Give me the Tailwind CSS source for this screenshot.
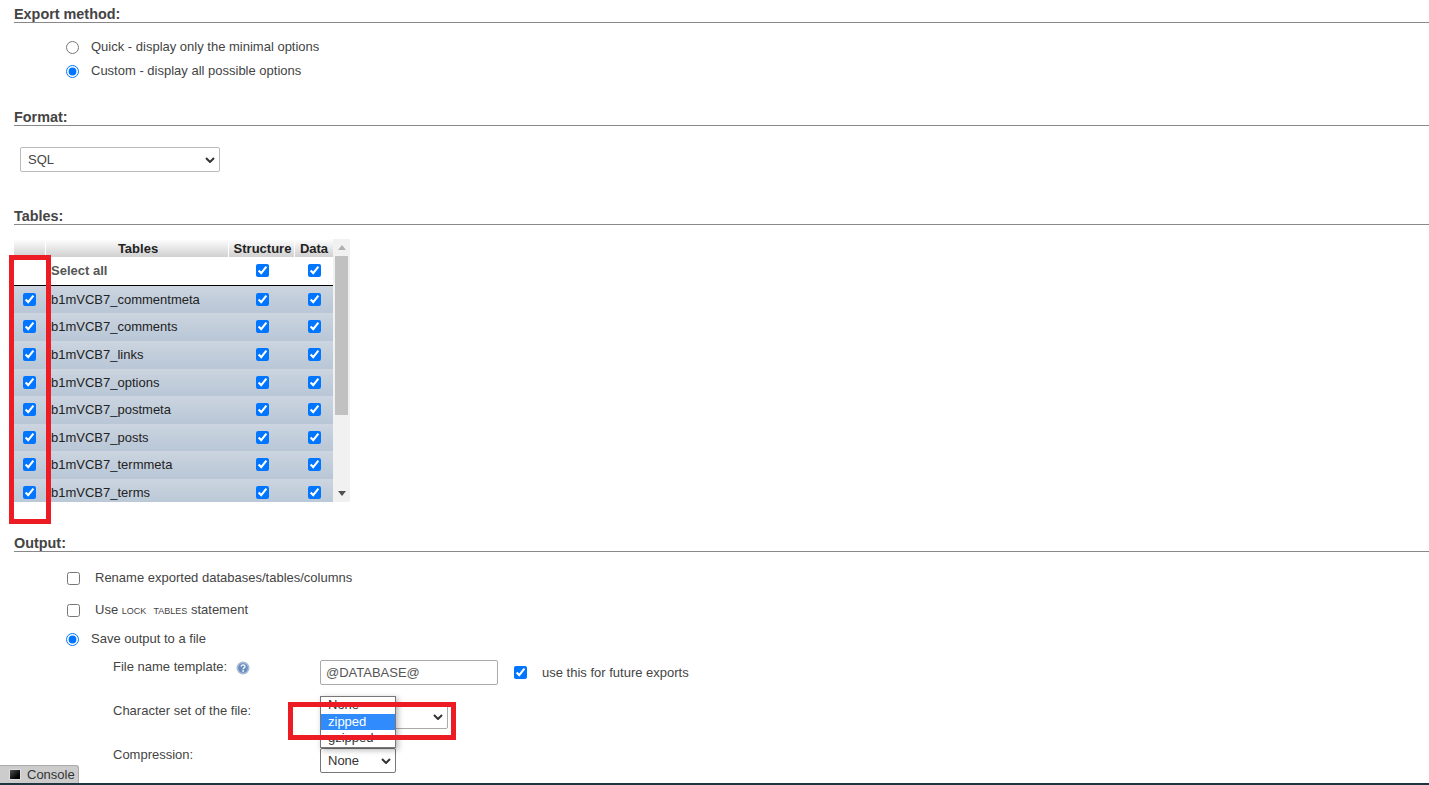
<!DOCTYPE html>
<html lang="en">
  <head>
    <meta charset="UTF-8" />
    <title>Export</title>
    <script src="https://cdn.jsdelivr.net/npm/@tailwindcss/browser@4"></script>
  </head>
  <body class="relative h-[785px] w-[1429px] overflow-hidden bg-white font-['Liberation_Sans',Arial,sans-serif] text-[13px] text-[#444]">
    <main class="pl-[14px]">
      <!-- export method -->
      <h3 class="mt-[7px] h-[16px] border-b border-[#888] text-[14.4px] leading-[15px] font-bold text-[#444]">Export method:</h3>
      <div class="mt-[16px] ml-[52px] flex h-[16px] items-center gap-[12px]">
        <input type="radio" name="method" class="m-0 h-[13px] w-[13px]" />
        <span>Quick - display only the minimal options</span>
      </div>
      <div class="mt-[8px] ml-[52px] flex h-[16px] items-center gap-[12px]">
        <input type="radio" name="method" checked class="m-0 h-[13px] w-[13px]" />
        <span>Custom - display all possible options</span>
      </div>

      <!-- format -->
      <h3 class="mt-[31px] h-[16px] border-b border-[#888] text-[14.4px] leading-[15px] font-bold">Format:</h3>
      <div class="relative mt-[21px] ml-[6px] flex h-[25px] w-[200px] items-center rounded-[2px] border border-[#bbb] pl-[7px]">
        SQL
        <svg class="absolute top-[9px] right-[4px] h-[6px] w-[10px]" viewBox="0 0 10 6"><path d="M1 1l4 4 4-4" fill="none" stroke="#333" stroke-width="2" /></svg>
      </div>

      <!-- tables -->
      <h3 class="mt-[37px] h-[16px] border-b border-[#888] text-[14.4px] leading-[15px] font-bold">Tables:</h3>
      <div class="mt-[14px] flex h-[263px] w-[336px] overflow-hidden">
        <div class="w-[319px] overflow-hidden">
          <div class="flex h-[18px] bg-gradient-to-b from-white to-[#d0d0d0] text-center leading-[20px] font-bold text-[#222]">
            <div class="w-[32px] border-r border-white"></div>
            <div class="w-[183px] border-r border-white pl-[2px]">Tables</div>
            <div class="w-[66px] border-r border-white pl-[2px]">Structure</div>
            <div class="w-[38px]">Data</div>
          </div>
          <div class="flex h-[29px] items-center border-b border-black bg-white pb-[1px]">
            <div class="w-[31px]"></div>
            <div class="w-[184px] pl-[6px] font-bold text-[#555]">Select all</div>
            <div class="flex w-[67px] justify-center"><input type="checkbox" checked class="m-0 h-[13px] w-[13px]" /></div>
            <div class="flex w-[37px] justify-center"><input type="checkbox" checked class="m-0 h-[13px] w-[13px]" /></div>
          </div>
          <div class="flex h-[27px] items-center bg-gradient-to-b from-[#ccd5e0] to-[#b8c6d6] text-[#222]">
            <div class="flex w-[31px] justify-center"><input type="checkbox" checked class="m-0 h-[13px] w-[13px]" /></div>
            <div class="w-[184px] pl-[6px]">b1mVCB7_commentmeta</div>
            <div class="flex w-[67px] justify-center"><input type="checkbox" checked class="m-0 h-[13px] w-[13px]" /></div>
            <div class="flex w-[37px] justify-center"><input type="checkbox" checked class="m-0 h-[13px] w-[13px]" /></div>
          </div>
          <div class="flex h-[27.5px] items-center bg-gradient-to-b from-[#ccd5e0] to-[#b8c6d6] text-[#222]">
            <div class="flex w-[31px] justify-center"><input type="checkbox" checked class="m-0 h-[13px] w-[13px]" /></div>
            <div class="w-[184px] pl-[6px]">b1mVCB7_comments</div>
            <div class="flex w-[67px] justify-center"><input type="checkbox" checked class="m-0 h-[13px] w-[13px]" /></div>
            <div class="flex w-[37px] justify-center"><input type="checkbox" checked class="m-0 h-[13px] w-[13px]" /></div>
          </div>
          <div class="flex h-[28px] items-center bg-gradient-to-b from-[#ccd5e0] to-[#b8c6d6] text-[#222]">
            <div class="flex w-[31px] justify-center"><input type="checkbox" checked class="m-0 h-[13px] w-[13px]" /></div>
            <div class="w-[184px] pl-[6px]">b1mVCB7_links</div>
            <div class="flex w-[67px] justify-center"><input type="checkbox" checked class="m-0 h-[13px] w-[13px]" /></div>
            <div class="flex w-[37px] justify-center"><input type="checkbox" checked class="m-0 h-[13px] w-[13px]" /></div>
          </div>
          <div class="flex h-[27.5px] items-center bg-gradient-to-b from-[#ccd5e0] to-[#b8c6d6] text-[#222]">
            <div class="flex w-[31px] justify-center"><input type="checkbox" checked class="m-0 h-[13px] w-[13px]" /></div>
            <div class="w-[184px] pl-[6px]">b1mVCB7_options</div>
            <div class="flex w-[67px] justify-center"><input type="checkbox" checked class="m-0 h-[13px] w-[13px]" /></div>
            <div class="flex w-[37px] justify-center"><input type="checkbox" checked class="m-0 h-[13px] w-[13px]" /></div>
          </div>
          <div class="flex h-[27.5px] items-center bg-gradient-to-b from-[#ccd5e0] to-[#b8c6d6] text-[#222]">
            <div class="flex w-[31px] justify-center"><input type="checkbox" checked class="m-0 h-[13px] w-[13px]" /></div>
            <div class="w-[184px] pl-[6px]">b1mVCB7_postmeta</div>
            <div class="flex w-[67px] justify-center"><input type="checkbox" checked class="m-0 h-[13px] w-[13px]" /></div>
            <div class="flex w-[37px] justify-center"><input type="checkbox" checked class="m-0 h-[13px] w-[13px]" /></div>
          </div>
          <div class="flex h-[27.5px] items-center bg-gradient-to-b from-[#ccd5e0] to-[#b8c6d6] text-[#222]">
            <div class="flex w-[31px] justify-center"><input type="checkbox" checked class="m-0 h-[13px] w-[13px]" /></div>
            <div class="w-[184px] pl-[6px]">b1mVCB7_posts</div>
            <div class="flex w-[67px] justify-center"><input type="checkbox" checked class="m-0 h-[13px] w-[13px]" /></div>
            <div class="flex w-[37px] justify-center"><input type="checkbox" checked class="m-0 h-[13px] w-[13px]" /></div>
          </div>
          <div class="flex h-[27.5px] items-center bg-gradient-to-b from-[#ccd5e0] to-[#b8c6d6] text-[#222]">
            <div class="flex w-[31px] justify-center"><input type="checkbox" checked class="m-0 h-[13px] w-[13px]" /></div>
            <div class="w-[184px] pl-[6px]">b1mVCB7_termmeta</div>
            <div class="flex w-[67px] justify-center"><input type="checkbox" checked class="m-0 h-[13px] w-[13px]" /></div>
            <div class="flex w-[37px] justify-center"><input type="checkbox" checked class="m-0 h-[13px] w-[13px]" /></div>
          </div>
          <div class="flex h-[27.5px] items-center bg-gradient-to-b from-[#ccd5e0] to-[#b8c6d6] text-[#222]">
            <div class="flex w-[31px] justify-center"><input type="checkbox" checked class="m-0 h-[13px] w-[13px]" /></div>
            <div class="w-[184px] pl-[6px]">b1mVCB7_terms</div>
            <div class="flex w-[67px] justify-center"><input type="checkbox" checked class="m-0 h-[13px] w-[13px]" /></div>
            <div class="flex w-[37px] justify-center"><input type="checkbox" checked class="m-0 h-[13px] w-[13px]" /></div>
          </div>
        </div>
        <!-- scrollbar -->
        <div class="flex w-[17px] flex-col items-center bg-[#f1f1f1]">
          <svg class="mt-[6px] h-[5px] w-[8px]" viewBox="0 0 8 5"><path d="M4 0l4 5H0z" fill="#b0b0b0" /></svg>
          <div class="mt-[6px] h-[159px] w-[13px] bg-[#c1c1c1]"></div>
          <svg class="mt-auto mb-[6px] h-[5px] w-[8px]" viewBox="0 0 8 5"><path d="M0 0h8L4 5z" fill="#505050" /></svg>
        </div>
      </div>

      <!-- output -->
      <h3 class="mt-[33px] h-[17px] border-b border-[#888] pt-[1px] text-[14.4px] leading-[15px] font-bold">Output:</h3>
      <div class="mt-[18px] ml-[53px] flex h-[16px] items-center gap-[15px]">
        <input type="checkbox" class="m-0 h-[13px] w-[13px]" />
        <span>Rename exported databases/tables/columns</span>
      </div>
      <div class="mt-[16px] ml-[53px] flex h-[16px] items-center gap-[15px]">
        <input type="checkbox" class="m-0 h-[13px] w-[13px]" />
        <span>Use <span class="[font-variant:small-caps]">lock&nbsp; tables</span> statement</span>
      </div>
      <div class="mt-[13px] ml-[52px] flex h-[16px] items-center gap-[12px]">
        <input type="radio" checked class="m-0 h-[13px] w-[13px]" />
        <span>Save output to a file</span>
      </div>
      <div class="mt-[13px] ml-[99px] flex h-[25px] items-start">
        <span class="w-[123px] leading-[13px]">File name template:</span>
        <svg class="mt-[1px] h-[14px] w-[14px]" viewBox="0 0 14 14">
          <circle cx="7" cy="7" r="6.5" fill="#a8bcd6" />
          <circle cx="7" cy="7" r="4.8" fill="#6a8dc0" />
          <path d="M5.2 5.6c0-2.2 3.8-2.2 3.8 0 0 1.3-1.9 1.3-1.9 2.6" fill="none" stroke="#fff" stroke-width="1.3" />
          <circle cx="7.1" cy="10" r=".9" fill="#fff" />
        </svg>
        <div class="ml-[70px] flex h-[25px] w-[178px] items-center rounded-[2px] border border-[#aaa] pl-[5px] text-[#555]">@DATABASE@</div>
        <input type="checkbox" checked class="mt-[6px] ml-[16px] h-[13px] w-[13px]" />
        <span class="ml-[15px] pt-[6px] leading-[13px]">use this for future exports</span>
      </div>
      <div class="mt-[19px] ml-[99px] flex h-[25px] items-start">
        <span class="w-[207px] leading-[13px]">Character set of the file:</span>
        <div class="relative h-[25px] w-[128px] rounded-[2px] border border-[#aaa]">
          <svg class="absolute top-[9px] right-[4px] h-[6px] w-[10px]" viewBox="0 0 10 6"><path d="M1 1l4 4 4-4" fill="none" stroke="#333" stroke-width="2" /></svg>
        </div>
      </div>
      <div class="mt-[19px] ml-[99px] flex h-[25px] items-start">
        <span class="w-[207px] leading-[13px]">Compression:</span>
        <div class="relative flex h-[25px] w-[76px] items-center rounded-[2px] border border-[#777] pl-[7px] text-[#333]">
          None
          <svg class="absolute top-[9px] right-[4px] h-[6px] w-[10px]" viewBox="0 0 10 6"><path d="M1 1l4 4 4-4" fill="none" stroke="#333" stroke-width="2" /></svg>
        </div>
      </div>
    </main>

    <!-- open select list -->
    <div class="absolute top-[696px] left-[320px] h-[52px] w-[76px] overflow-hidden border border-[#777] bg-white leading-[15px] text-[#333] shadow-[2px_2px_6px_rgba(0,0,0,0.3)]">
      <div class="h-[17px] pl-[7px]">None</div>
      <div class="h-[16px] bg-[#308cfc] pl-[7px] text-white">zipped</div>
      <div class="h-[16px] pl-[7px]">gzipped</div>
    </div>

    <!-- red annotations -->
    <div class="absolute top-[255px] left-[9px] h-[269px] w-[42px] border-[5px] border-[#ed1c24]"></div>
    <div class="absolute top-[702px] left-[288px] h-[38px] w-[168px] border-[5px] border-[#ed1c24]"></div>

    <!-- console -->
    <div class="absolute bottom-[2px] left-0 flex h-[18px] w-[79px] items-center rounded-tr-[3px] border-t border-r border-[#aaa] bg-[#ccc] pl-[9px] text-[#333]">
      <span class="mr-[6px] h-[11px] w-[12px] border border-[#ddd] bg-gradient-to-br from-[#555] to-black"></span>Console
    </div>
    <div class="absolute right-0 bottom-0 left-0 h-[2px] bg-[#1f3440]"></div>
  </body>
</html>
